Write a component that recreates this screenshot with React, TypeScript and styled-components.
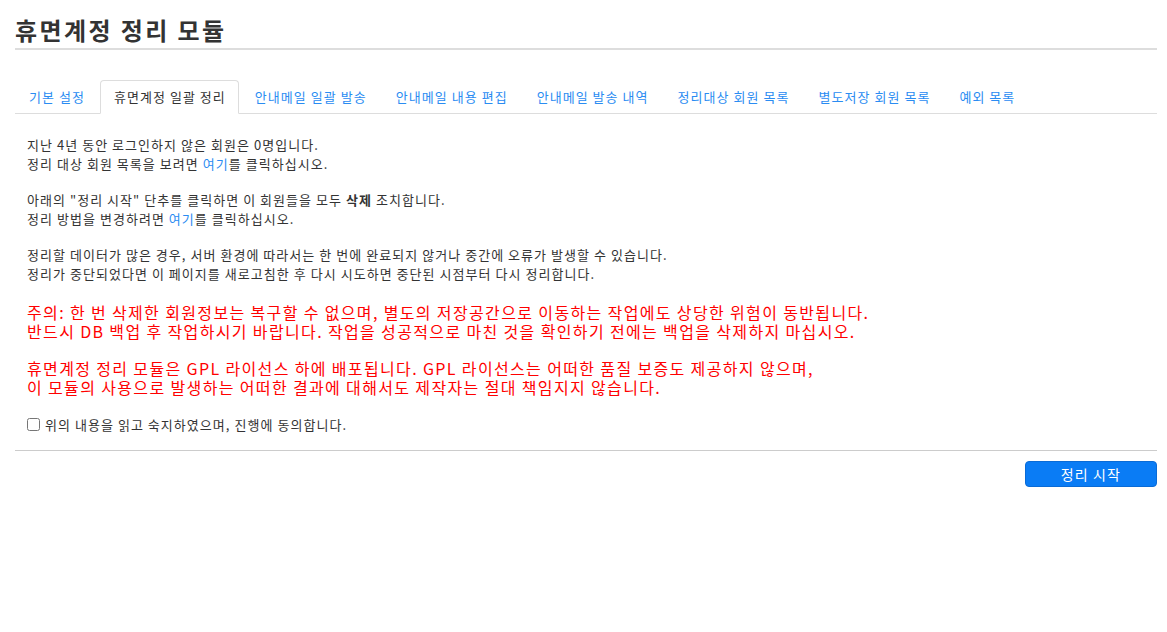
import { useState } from 'react';
import styled, { createGlobalStyle } from 'styled-components';

const GlobalStyle = createGlobalStyle`
  html, body {
    margin: 0;
    padding: 0;
    background: #fff;
  }
  body {
    font-family: 'Noto Sans CJK KR', 'Noto Sans', 'Liberation Sans', sans-serif;
    color: #333;
    font-size: 13px;
    letter-spacing: 0.08em;
  }
`;

const tabs = [
  '기본 설정',
  '휴면계정 일괄 정리',
  '안내메일 일괄 발송',
  '안내메일 내용 편집',
  '안내메일 발송 내역',
  '정리대상 회원 목록',
  '별도저장 회원 목록',
  '예외 목록',
];

const App = () => {
  const [active, setActive] = useState(1);
  const [agreed, setAgreed] = useState(false);

  return (
    <>
      <GlobalStyle />
      <Page>
        <PageTitle>휴면계정 정리 모듈</PageTitle>
        <TabList>
          {tabs.map((label, i) => (
            <li key={label}>
              <Tab $active={i === active} onClick={() => setActive(i)}>
                {label}
              </Tab>
            </li>
          ))}
        </TabList>
        <Content>
          <Paragraph>
            지난 4년 동안 로그인하지 않은 회원은 0명입니다.
            <br />
            정리 대상 회원 목록을 보려면 <Link href="#">여기</Link>를 클릭하십시오.
          </Paragraph>
          <Paragraph>
            아래의 "정리 시작" 단추를 클릭하면 이 회원들을 모두 <strong>삭제</strong> 조치합니다.
            <br />
            정리 방법을 변경하려면 <Link href="#">여기</Link>를 클릭하십시오.
          </Paragraph>
          <Paragraph>
            정리할 데이터가 많은 경우, 서버 환경에 따라서는 한 번에 완료되지 않거나 중간에 오류가 발생할 수 있습니다.
            <br />
            정리가 중단되었다면 이 페이지를 새로고침한 후 다시 시도하면 중단된 시점부터 다시 정리합니다.
          </Paragraph>
          <Warning>
            주의: 한 번 삭제한 회원정보는 복구할 수 없으며, 별도의 저장공간으로 이동하는 작업에도 상당한 위험이 동반됩니다.
            <br />
            반드시 DB 백업 후 작업하시기 바랍니다. 작업을 성공적으로 마친 것을 확인하기 전에는 백업을 삭제하지 마십시오.
          </Warning>
          <Warning>
            휴면계정 정리 모듈은 GPL 라이선스 하에 배포됩니다. GPL 라이선스는 어떠한 품질 보증도 제공하지 않으며,
            <br />
            이 모듈의 사용으로 발생하는 어떠한 결과에 대해서도 제작자는 절대 책임지지 않습니다.
          </Warning>
          <AgreeLabel>
            <input type="checkbox" checked={agreed} onChange={(e) => setAgreed(e.target.checked)} />
            위의 내용을 읽고 숙지하였으며, 진행에 동의합니다.
          </AgreeLabel>
        </Content>
        <ButtonBar>
          <PrimaryButton type="button">정리 시작</PrimaryButton>
        </ButtonBar>
      </Page>
    </>
  );
};

export default App;

const Page = styled.div`
  padding: 15px 10px 0 15px;
`;

const PageTitle = styled.h1`
  margin: 0;
  font-size: 24px;
  line-height: 30px;
  font-weight: 700;
  letter-spacing: 0.1em;
  color: #333;
  padding-bottom: 3px;
  border-bottom: 2px solid #ddd;
`;

const TabList = styled.ul`
  display: flex;
  list-style: none;
  margin: 30px 0 0;
  padding: 0;
  border-bottom: 1px solid #ddd;

  > li {
    margin: 0 2px -1px 0;
  }
`;

const Tab = styled.a<{ $active: boolean }>`
  display: block;
  padding: 7px 12px 8px 13px;
  line-height: 17px;
  font-size: 13px;
  cursor: pointer;
  text-decoration: none;
  border: 1px solid ${({ $active }) => ($active ? '#ddd' : 'transparent')};
  border-bottom-color: ${({ $active }) => ($active ? '#fff' : 'transparent')};
  border-radius: 4px 4px 0 0;
  background: ${({ $active }) => ($active ? '#fff' : 'transparent')};
  color: ${({ $active }) => ($active ? '#333' : '#2a8cf2')};
`;

const Content = styled.div`
  padding: 21px 12px 16px;
  border-bottom: 1px solid #ccc;
`;

const Paragraph = styled.p`
  margin: 0 0 17px;
  font-size: 13px;
  line-height: 19px;

  strong {
    font-weight: 700;
  }
`;

const Link = styled.a`
  color: #2a8cf2;
  text-decoration: none;
`;

const Warning = styled.p`
  margin: 0 0 18px;
  font-size: 16px;
  line-height: 19px;
  letter-spacing: 0.085em;
  color: #ff0000;

  ${Paragraph} + & {
    margin-top: 20px;
  }
`;

const AgreeLabel = styled.label`
  display: flex;
  align-items: center;
  font-size: 13px;
  line-height: 19px;

  input {
    width: 13px;
    height: 13px;
    margin: 0 5px 0 0;
  }
`;

const ButtonBar = styled.div`
  display: flex;
  justify-content: flex-end;
  padding-top: 10px;
`;

const PrimaryButton = styled.button`
  width: 132px;
  height: 26px;
  border: 1px solid #0a6bd6;
  border-radius: 4px;
  background: #0a7cf5;
  color: #fff;
  font-family: inherit;
  font-size: 14px;
  letter-spacing: 0.08em;
  cursor: pointer;
`;
